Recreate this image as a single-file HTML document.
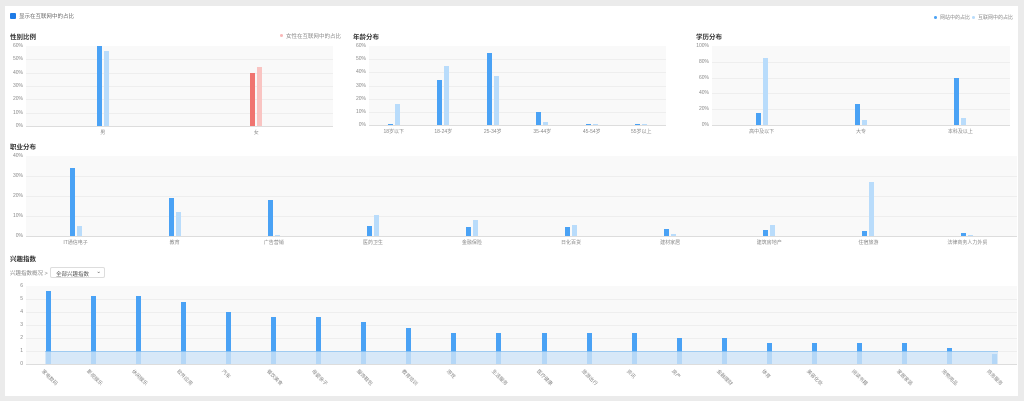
<!DOCTYPE html><html><head><meta charset="utf-8"><style>
*{margin:0;padding:0;box-sizing:border-box}
body{width:1024px;height:401px;background:#ebebeb;font-family:"Liberation Sans","Noto Sans CJK SC",sans-serif;position:relative;overflow:hidden;color:#666}
#p{position:absolute;left:5px;top:6px;width:1013px;height:390px;background:#fff}
.a{position:absolute;white-space:nowrap}
.t{font-size:6.5px;font-weight:bold;color:#333}
.s{font-size:5.5px;color:#888}
.pl{position:absolute;background:#f9f9f9;border-bottom:1px solid #ddd}
.g{position:absolute;left:0;right:0;height:1px;background:#eee}
.b{position:absolute}
</style></head><body><div id="p"></div>
<div class="a" style="left:10px;top:13px;width:6px;height:6px;background:#1e7be6;border-radius:1px"></div>
<div class="a s" style="left:19px;top:12px;color:#666">显示在互联网中的占比</div>
<div class="a" style="left:934px;top:16px;width:3px;height:3px;border-radius:50%;background:#4aa2f5"></div>
<div class="a s" style="left:940px;top:14px;font-size:5px">网站中的占比</div>
<div class="a" style="left:972px;top:16px;width:3px;height:3px;border-radius:50%;background:#b9dcfb"></div>
<div class="a s" style="left:978px;top:14px;font-size:5px">互联网中的占比</div>
<div class="a" style="left:280px;top:34px;width:3px;height:3px;border-radius:50%;background:#f9b8b8"></div>
<div class="a s" style="left:286px;top:32px">女性在互联网中的占比</div>
<div class="a t" style="left:10px;top:31px">性别比例</div>
<div class="a t" style="left:353px;top:31px">年龄分布</div>
<div class="a t" style="left:696px;top:31px">学历分布</div>
<div class="a t" style="left:10px;top:141px">职业分布</div>
<div class="a t" style="left:10px;top:253px">兴趣指数</div>
<div class="a s" style="left:10px;top:269px">兴趣指数概况 &gt;</div>
<div class="a s" style="left:50px;top:267px;width:55px;height:11px;border:1px solid #ddd;border-radius:2px;padding:2px 5px;color:#555">全部兴趣指数<span style="position:absolute;right:3px;top:1px">⌄</span></div>
<script>
function chart(x,y,w,h,max,ticks,cats,sets,colors,fmt,rot){
 var H='';
 H+='<div class="pl" style="left:'+x+'px;top:'+y+'px;width:'+w+'px;height:'+(h+1)+'px">';
 for(var i=1;i<ticks;i++)H+='<div class="g" style="top:'+(h*i/ticks)+'px"></div>';
 H+='</div>';
 for(var i=0;i<=ticks;i++){H+='<div class="a s" style="left:'+(x-24)+'px;width:21px;text-align:right;top:'+(y+h-h*i/ticks-3)+'px;font-size:5px">'+fmt(max*i/ticks)+'</div>';}
 var n=cats.length,cw=w/n;
 cats.forEach(function(c,k){
  var cx=x+cw*(k+0.5);
  var bw=5;
  sets.forEach(function(s,j){
   var v=s[k],bh=h*v/max,bx=cx-(sets.length==2?(j==0?6:-1):2.5);
   var col=typeof colors[j]=='function'?colors[j](k):colors[j];
   H+='<div class="b" style="left:'+bx+'px;top:'+(y+h-bh)+'px;width:'+bw+'px;height:'+bh+'px;background:'+col+'"></div>';
  });
  if(rot)H+='<div class="a s" style="left:'+(cx-4)+'px;top:'+(y+h+4)+'px;transform:rotate(45deg);transform-origin:left top;font-size:5px">'+c+'</div>';
  else H+='<div class="a s" style="left:'+(cx-40)+'px;width:80px;text-align:center;top:'+(y+h+3)+'px;font-size:5px">'+c+'</div>';
 });
 document.body.insertAdjacentHTML('beforeend',H);
}
var pct=function(v){return Math.round(v)+'%'};
chart(26,46,307,80,60,6,['男','女'],[[60,40],[56,44]],[function(k){return k?'#f07470':'#4aa2f5'},function(k){return k?'#f9c4c2':'#b9dcfb'}],pct);
chart(369,46,297,79,60,6,['18岁以下','18-24岁','25-34岁','35-44岁','45-54岁','55岁以上'],[[0.5,34,55,10,1,1],[16,45,37,2,0.5,0.5]],['#4aa2f5','#b9dcfb'],pct);
chart(712,46,298,79,100,5,['高中及以下','大专','本科及以上'],[[15,26,60],[85,6,9]],['#4aa2f5','#b9dcfb'],pct);
chart(26,156,991,80,40,4,['IT通信电子','教育','广告营销','医药卫生','金融保险','日化百货','建材家居','建筑房地产','住宿旅游','法律商务人力外贸'],[[34,19,18,5,4.5,4.5,3.5,3,2.5,1.5],[5,12,0.5,10.5,8,5.5,1,5.5,27,0.5]],['#4aa2f5','#b9dcfb'],pct);
document.body.insertAdjacentHTML('beforeend','<div class="b" style="left:45px;top:351px;width:953px;height:13px;background:#cfe5f8;border-top:1px solid #8cc3f2;z-index:2;opacity:.8"></div>');
chart(26,286,991,78,6,6,['家电数码','影视娱乐','休闲娱乐','软件应用','汽车','餐饮美食','母婴亲子','服饰鞋包','教育培训','游戏','生活服务','医疗健康','旅游出行','资讯','房产','金融理财','体育','美容化妆','阅读书籍','家居家装','宠物用品','商务服务'],[[5.6,5.2,5.2,4.8,4,3.6,3.6,3.2,2.8,2.4,2.4,2.4,2.4,2.4,2,2,1.6,1.6,1.6,1.6,1.2,0.8]],['#4aa2f5'],function(v){return Math.round(v)},true);
</script>
</body></html>
